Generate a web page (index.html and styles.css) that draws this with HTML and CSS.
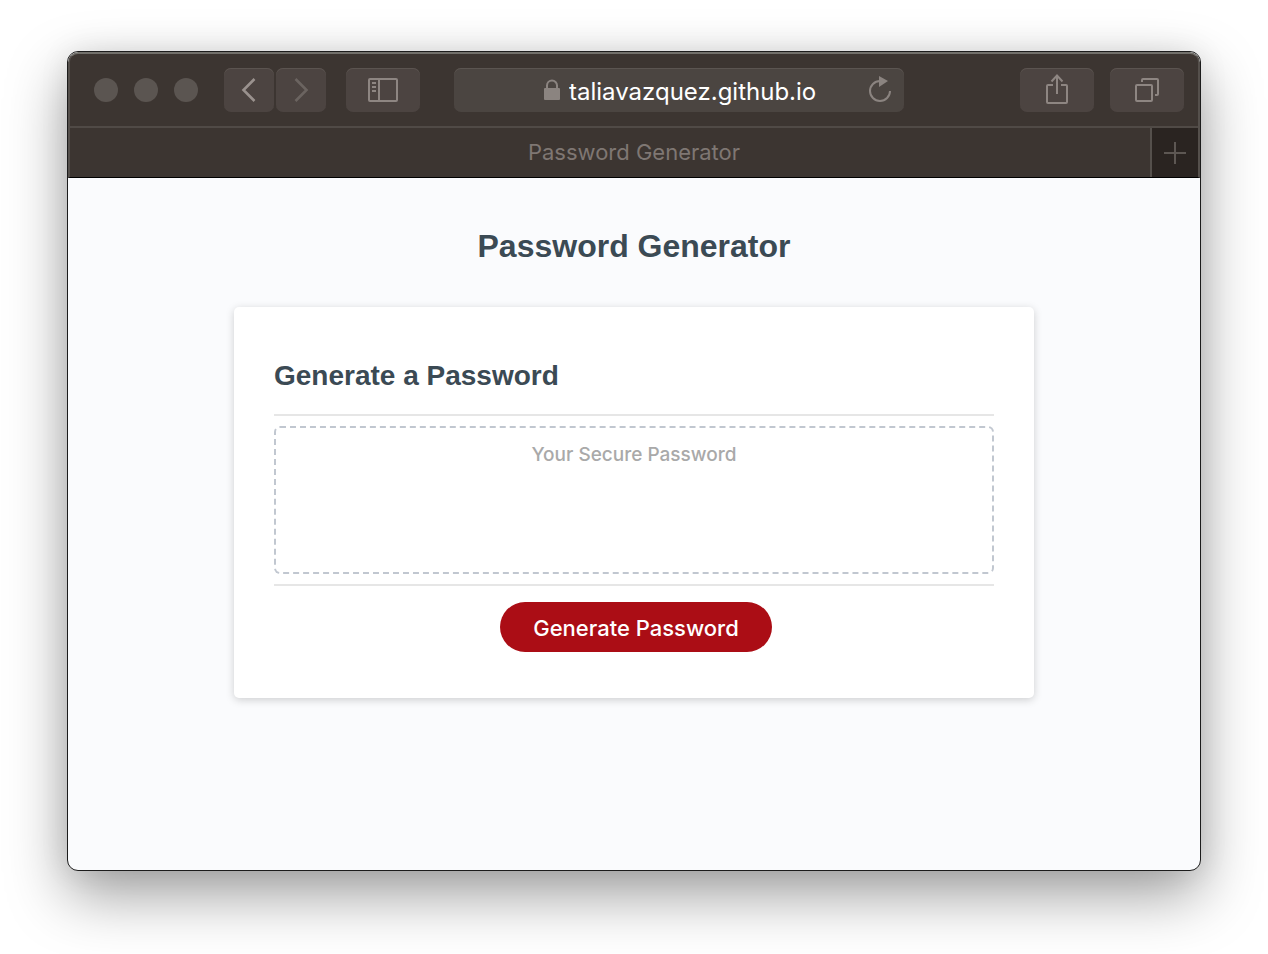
FILE: index.html
```html
<!DOCTYPE html>
<html lang="en">
<head>
<meta charset="utf-8">
<meta name="viewport" content="width=device-width, initial-scale=1">
<title>Password Generator</title>
<link rel="stylesheet" href="styles.css">
</head>
<body>
<div class="window">
  <header class="chrome">
    <div class="toolbar">
      <div class="lights"><span class="light"></span><span class="light"></span><span class="light"></span></div>
      <div class="nav">
        <button class="tool tool-small" type="button" aria-label="Back">
          <svg width="50" height="44" viewBox="0 0 50 44"><path d="M30.500 11 19.500 22l11 11" stroke="#9a928e" stroke-width="2.600"/></svg>
        </button>
        <button class="tool tool-small" type="button" aria-label="Forward">
          <svg width="50" height="44" viewBox="0 0 50 44"><path d="M19.500 11l11 11-11 11" stroke="#6b6460" stroke-width="2.600"/></svg>
        </button>
      </div>
      <button class="tool" type="button" aria-label="Show sidebar">
        <svg width="74" height="44" viewBox="0 0 74 44" stroke="#8e8682" stroke-width="2"><rect x="23" y="11" width="28" height="22" rx="1"/><path d="M33 11v22M26 15h4M26 19h4M26 23h4"/></svg>
      </button>
      <div class="address">
        <svg class="lock" width="16" height="22" viewBox="0 0 16 22"><path d="M3 11V6.500a5 5 0 0 1 10 0V11" stroke="#8b8480" stroke-width="2"/><rect y="9" width="16" height="12" rx="1" fill="#8b8480"/></svg>
        <input class="url" type="text" aria-label="Address" value="taliavazquez.github.io">
        <button class="reload" type="button" aria-label="Reload">
          <svg width="24" height="28" viewBox="0 0 24 28"><path d="M12 5A10 10 0 1 0 22 15" stroke="#8b8480" stroke-width="2"/><path d="M11 0l9 5-9 6z" fill="#8b8480"/></svg>
        </button>
      </div>
      <div class="actions">
        <button class="tool" type="button" aria-label="Share">
          <svg width="74" height="44" viewBox="0 0 74 44" stroke="#8e8682" stroke-width="2"><path d="M33 17h-5a1 1 0 0 0-1 1v16a1 1 0 0 0 1 1h18a1 1 0 0 0 1-1V18a1 1 0 0 0-1-1h-5M37 26V8M31.500 13.500 37 7.500l5.500 6"/></svg>
        </button>
        <button class="tool" type="button" aria-label="Show all tabs">
          <svg width="74" height="44" viewBox="0 0 74 44" stroke="#8e8682" stroke-width="2"><rect x="26" y="17" width="16" height="16" rx="1"/><path d="M32 14v-2a1 1 0 0 1 1-1h14a1 1 0 0 1 1 1v14a1 1 0 0 1-1 1h-2"/></svg>
        </button>
      </div>
    </div>
    <div class="tabs">
      <div class="tab">Password Generator</div>
      <button class="new-tab" type="button" aria-label="New tab">
        <svg width="22" height="22" viewBox="0 0 22 22"><path d="M11 0v22M0 11h22" stroke="#5d5753" stroke-width="2"/></svg>
      </button>
    </div>
  </header>
  <main class="page">
    <h1 class="title">Password Generator</h1>
    <section class="card">
      <h2 class="card-title"><label for="password">Generate a Password</label></h2>
      <div class="card-body">
        <textarea class="password" id="password" readonly placeholder="Your Secure Password"></textarea>
      </div>
      <div class="card-footer"><button class="generate" type="button">Generate Password</button></div>
    </section>
  </main>
</div>
</body>
</html>
```
FILE: styles.css
```css
* {
  box-sizing: border-box;
}

body {
  margin: 0;
  min-height: 100vh;
  padding: 51px 67px 83px;
  display: flex;
  background: #fff;
  font-family: Inter, "Liberation Sans", sans-serif;
}

button {
  border: 0;
  padding: 0;
  font: inherit;
}

svg {
  display: block;
  fill: none;
}

.window {
  flex: 1;
  min-width: 0;
  display: flex;
  flex-direction: column;
  border: 1px solid #1c1c1c;
  border-radius: 11px;
  overflow: hidden;
  background: #fafbfd;
  box-shadow: 0 24px 60px rgba(0, 0, 0, 0.38), 0 0 30px rgba(0, 0, 0, 0.08);
}

.chrome {
  background: #3c3531;
  border: 2px solid #55504c;
  border-top-color: #72706b;
  border-bottom: 1px solid #000;
  border-radius: 10px 10px 0 0;
}

.toolbar {
  display: flex;
  align-items: center;
  padding: 14px 14px 14px 24px;
  border-bottom: 2px solid #504a46;
}

.lights {
  display: flex;
  gap: 16px;
  margin-right: 26px;
}

.light {
  width: 24px;
  height: 24px;
  border-radius: 50%;
  background: #5b5551;
}

.nav {
  display: flex;
  gap: 2px;
  margin-right: 20px;
}

.tool {
  width: 74px;
  height: 44px;
  border-radius: 7px;
  background: #4c4441;
  box-shadow: inset 0 1px #5b5450;
}

.tool-small {
  width: 50px;
}

.address {
  flex: 0 1 450px;
  min-width: 0;
  height: 44px;
  margin: 0 34px;
  padding: 0 12px 0 90px;
  display: flex;
  align-items: center;
  border-radius: 7px;
  background: #4b4541;
  box-shadow: inset 0 1px #5b5551;
}

.lock {
  flex: none;
}

.url {
  flex: 1;
  min-width: 0;
  height: 40px;
  padding: 3px 0 0 9px;
  border: 0;
  outline: 0;
  background: none;
  color: #fff;
  font: 400 24px Inter, sans-serif;
}

.reload {
  flex: none;
  background: none;
}

.actions {
  display: flex;
  gap: 16px;
  margin-left: auto;
}

.tabs {
  display: flex;
  height: 49px;
}

.tab {
  flex: 1;
  display: flex;
  align-items: center;
  justify-content: center;
  padding: 0 0 2px 48px;
  color: #7f7773;
  font-size: 22px;
}

.new-tab {
  width: 48px;
  display: flex;
  align-items: center;
  justify-content: center;
  border-left: 2px solid #55504c;
  background: #2a2421;
}

.page {
  flex: 1;
  padding: 48px 32px;
  color: #3b4a54;
}

.title,
.card-title {
  margin: 0;
  font-family: "Liberation Sans", Arial, sans-serif;
  font-weight: 700;
}

.title {
  margin-bottom: 41px;
  font-size: 32px;
  line-height: 40px;
  text-align: center;
}

.card {
  max-width: 800px;
  margin: 0 auto;
  padding: 49px 40px 46px;
  border-radius: 5px;
  background: #fff;
  box-shadow: 0 2px 8px rgba(0, 0, 0, 0.18);
}

.card-title {
  padding-bottom: 18px;
  font-size: 28px;
  line-height: 40px;
}

.card-body {
  padding: 10px 0;
  border: solid #e6e6e6;
  border-width: 2px 0;
}

.password {
  display: block;
  width: 100%;
  height: 148px;
  padding: 13px 12px;
  border: 2px dashed #c1c7d0;
  border-radius: 6px;
  outline: 0;
  resize: none;
  background: #fff;
  color: #3b4a54;
  font: 500 19px/28px Inter, sans-serif;
  text-align: center;
}

.password::placeholder {
  color: #a9a9a9;
}

.card-footer {
  display: flex;
  justify-content: center;
  padding: 16px 0 0 4px;
}

.generate {
  width: 272px;
  height: 50px;
  padding-top: 2px;
  border-radius: 25px;
  background: #ab0d15;
  color: #fff;
  font-size: 22px;
  font-weight: 500;
}
```
